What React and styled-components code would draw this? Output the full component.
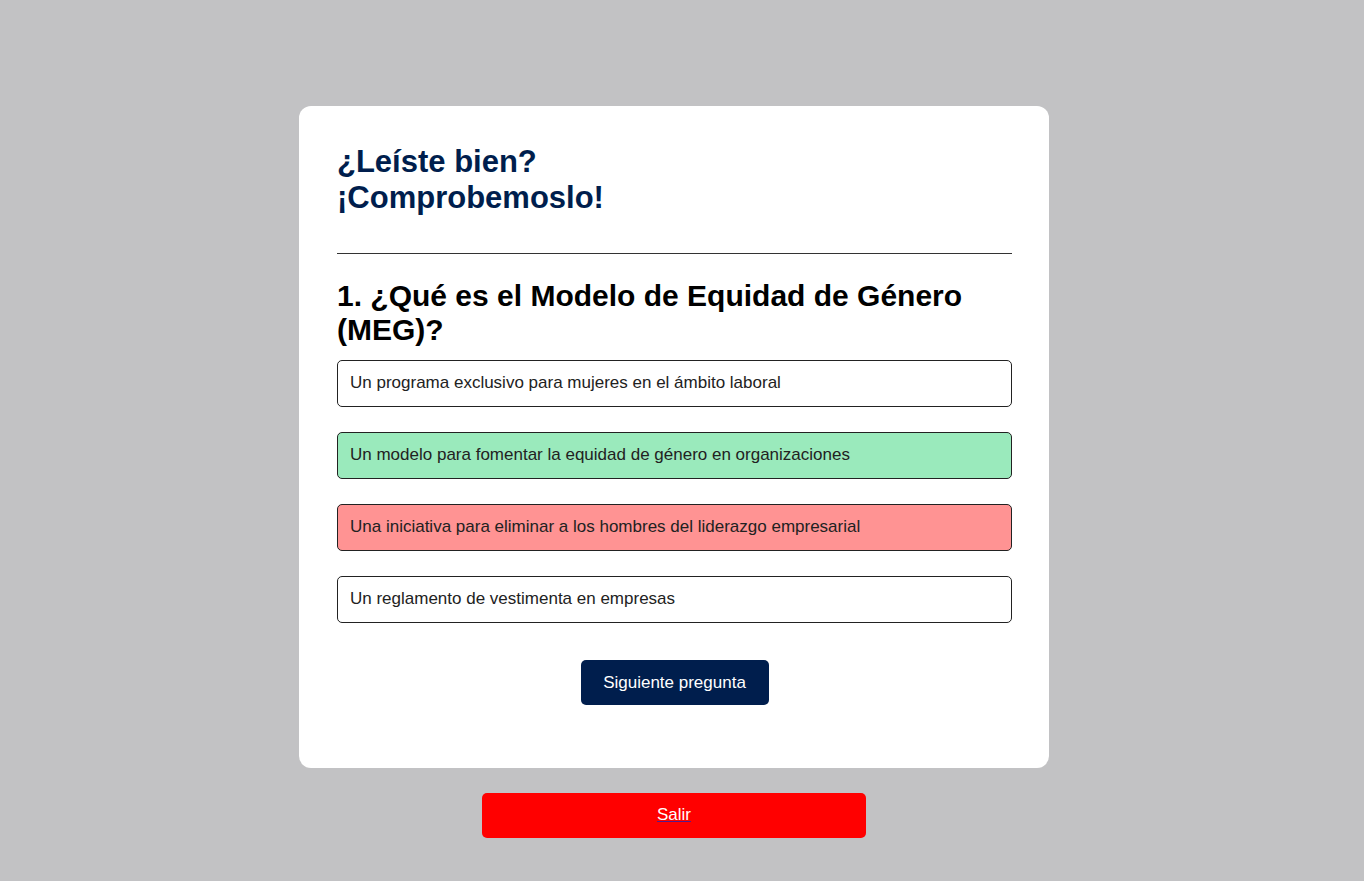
import React from "react";
import styled, { createGlobalStyle, css } from "styled-components";

const GlobalStyle = createGlobalStyle`
  *, *::before, *::after { box-sizing: border-box; }
  body {
    margin: 0;
    background: #c2c2c4;
    color: #000;
    font-family: "Liberation Sans", Arial, Helvetica, sans-serif;
    font-size: 17px;
    line-height: 20px;
  }
`;

const Page = styled.main`
  display: flex;
  flex-direction: column;
  align-items: center;
  gap: 25px;
  min-height: 100vh;
  padding: 106px 32px 40px 16px;
`;

const Card = styled.section`
  width: 100%;
  max-width: 750px;
  padding: 38px 37px 63px 38px;
  border-radius: 12px;
  background: #fff;
`;

const Title = styled.h1`
  margin: 0;
  padding-bottom: 37px;
  border-bottom: 1px solid #333;
  color: #001e4d;
  font-size: 31px;
  line-height: 36px;
`;

const Question = styled.h2`
  margin: 25px 0 13px;
  font-size: 30px;
  line-height: 34px;
`;

const Options = styled.div`
  display: flex;
  flex-direction: column;
  gap: 25px;
  margin-bottom: 37px;
`;

const backgrounds = { correct: "#9aeabc", incorrect: "#ff9393", neutral: "#fff" };

const Option = styled.button`
  width: 100%;
  padding: 12px 12px 13px;
  border: 1px solid #222;
  border-radius: 5px;
  background: ${({ $state }) => backgrounds[$state]};
  color: #222;
  font: inherit;
  text-align: left;
`;

const Actions = styled.div`
  display: flex;
  justify-content: center;
`;

const buttonShape = css`
  display: block;
  max-width: 100%;
  border: 0;
  border-radius: 5px;
  color: #fff;
  font: inherit;
  text-align: center;
  cursor: pointer;
`;

const NextButton = styled.button`
  ${buttonShape}
  width: 188px;
  padding: 13px 12px 12px;
  background: #001e4d;
`;

const ExitLink = styled.a`
  ${buttonShape}
  width: 384px;
  padding: 12px 12px 13px;
  background: #f00;
  text-decoration: underline 1px #551a8b;
  text-underline-offset: 1px;
  text-decoration-skip-ink: none;
`;

const answers = [
  { text: "Un programa exclusivo para mujeres en el ámbito laboral", state: "neutral" },
  { text: "Un modelo para fomentar la equidad de género en organizaciones", state: "correct" },
  { text: "Una iniciativa para eliminar a los hombres del liderazgo empresarial", state: "incorrect" },
  { text: "Un reglamento de vestimenta en empresas", state: "neutral" },
];

export default function App() {
  return (
    <>
      <GlobalStyle />
      <Page>
        <Card>
          <Title>
            ¿Leíste bien?
            <br />
            ¡Comprobemoslo!
          </Title>
          <Question>1. ¿Qué es el Modelo de Equidad de Género (MEG)?</Question>
          <Options>
            {answers.map(({ text, state }) => (
              <Option key={text} type="button" $state={state}>
                {text}
              </Option>
            ))}
          </Options>
          <Actions>
            <NextButton type="button">Siguiente pregunta</NextButton>
          </Actions>
        </Card>
        <ExitLink href="#salir">Salir</ExitLink>
      </Page>
    </>
  );
}
